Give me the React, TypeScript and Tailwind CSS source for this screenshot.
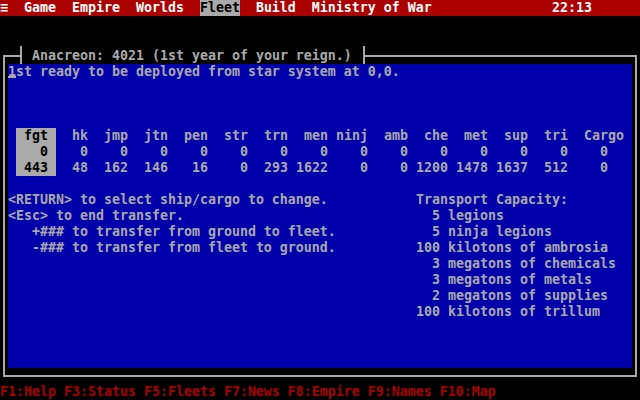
const cols = ['fgt', 'hk', 'jmp', 'jtn', 'pen', 'str', 'trn', 'men', 'ninj', 'amb', 'che', 'met', 'sup', 'tri'];
const ground = [0, 0, 0, 0, 0, 0, 0, 0, 0, 0, 0, 0, 0, 0];
const fleet = [443, 48, 162, 146, 16, 0, 293, 1622, 0, 0, 1200, 1478, 1637, 512];

const capacity = [
  '  5 legions',
  '  5 ninja legions',
  '100 kilotons of ambrosia',
  '  3 megatons of chemicals',
  '  3 megatons of metals',
  '  2 megatons of supplies',
  '100 kilotons of trillum',
];

const help = [
  '<RETURN> to select ship/cargo to change.',
  '<Esc> to end transfer.',
  '   +### to transfer from ground to fleet.',
  '   -### to transfer from fleet to ground.',
];

function TableRow({ cells, cargo }: { cells: (string | number)[]; cargo: string }) {
  return (
    <div className="flex h-4">
      {cells.map((c, i) => (
        <div
          key={i}
          className={
            i === 0
              ? 'w-[40px] pr-[8px] text-right bg-[#aaaaaa] text-black'
              : 'w-[40px] pr-[8px] text-right'
          }
        >
          {c}
        </div>
      ))}
      <div className="w-[56px] text-center">{cargo}</div>
    </div>
  );
}

export default function App() {
  return (
    <div className="w-[640px] h-[400px] bg-black flex flex-col overflow-hidden whitespace-pre font-['DejaVu_Sans_Mono',monospace] text-[13.29px] leading-[16px] font-bold text-[#aaaaaa]">
      {/* menu bar */}
      <div className="h-4 flex bg-[#aa0000] text-white">
        <span>≡  Game  Empire  Worlds  </span>
        <span className="bg-[#aaaaaa] text-black">Fleet</span>
        <span>  Build  Ministry of War</span>
        <span className="ml-auto pr-[48px]">22:13</span>
      </div>

      <div className="h-[39px] shrink-0" />

      {/* window */}
      <div className="relative ml-[3px] w-[634px] h-[322px] shrink-0 border-2 border-[#aaaaaa] px-[3px] py-[7px]">
        <div className="absolute left-[15px] top-[-11px] w-[345px] h-[18px] pt-[2px] pl-[10px] bg-black border-x-2 border-[#aaaaaa]">
          Anacreon: 4021 (1st year of your reign.)
        </div>

        <div className="h-full bg-[#0000aa] flex flex-col">
          <div className="h-4">
            <span className="relative">
              1<span className="absolute left-0 right-0 top-[12px] h-[2px] bg-[#aaaaaa]" />
            </span>
            st ready to be deployed from star system at 0,0.
          </div>

          <div className="h-12" />

          <div className="pl-[8px]">
            <TableRow cells={cols} cargo="Cargo" />
            <TableRow cells={ground} cargo="0" />
            <TableRow cells={fleet} cargo="0" />
          </div>

          <div className="h-4" />

          <div className="grid grid-cols-[408px_1fr]">
            <div className="flex flex-col">
              {help.map((l) => (
                <div key={l} className="h-4">{l}</div>
              ))}
            </div>
            <div className="flex flex-col">
              <div className="h-4">Transport Capacity:</div>
              {capacity.map((l) => (
                <div key={l} className="h-4">{l}</div>
              ))}
            </div>
          </div>
        </div>
      </div>

      <div className="h-[7px] shrink-0" />

      <div className="h-4 text-[#aa0000]">
        F1:Help F3:Status F5:Fleets F7:News F8:Empire F9:Names F10:Map
      </div>
    </div>
  );
}
